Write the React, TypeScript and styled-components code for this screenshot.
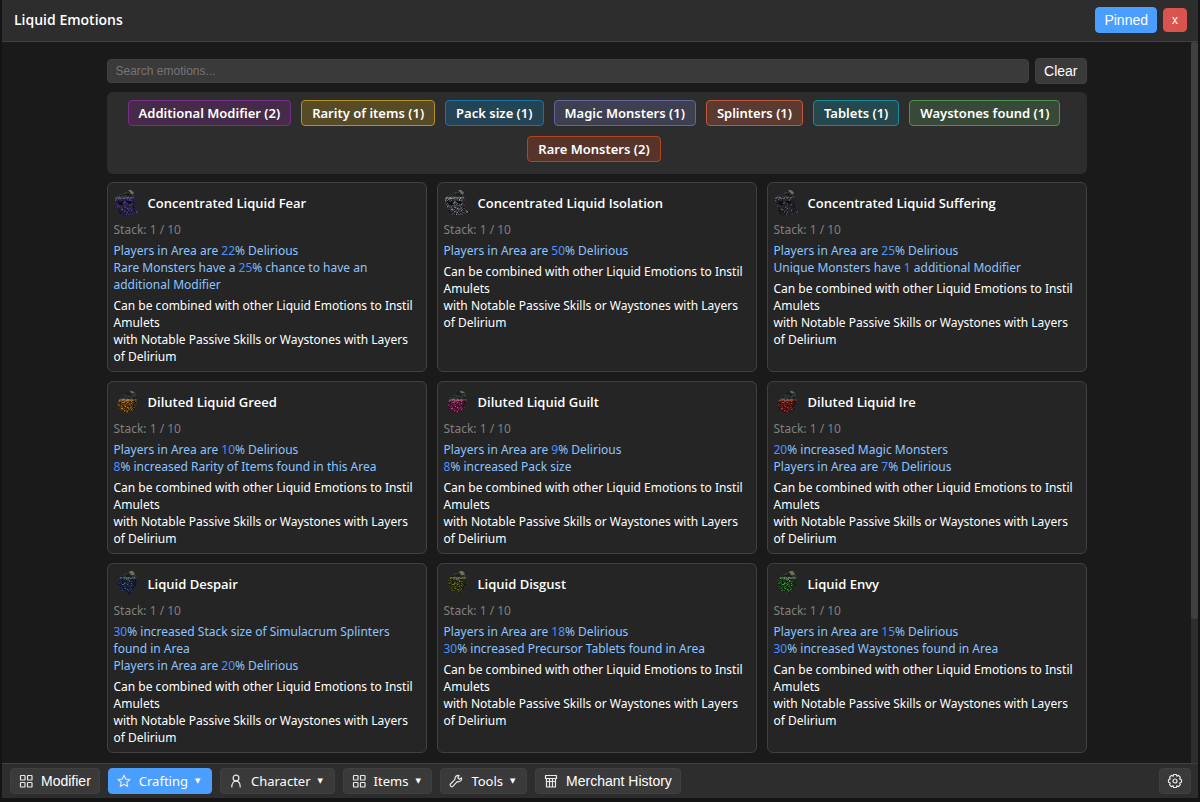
import React, { useId } from "react";
import styled, { createGlobalStyle, css } from "styled-components";

const uiFont = `"Open Sans", "Noto Sans", sans-serif`;
const menuFont = `"Noto Sans", "Open Sans", sans-serif`;
const buttonFont = `"Liberation Sans", Arial, sans-serif`;

const GlobalStyle = createGlobalStyle`
  *, *::before, *::after { box-sizing: border-box; }
  body {
    margin: 0;
    background: #141414;
    color: #fff;
    font-family: ${uiFont};
    font-size: 12px;
  }
`;

const Window = styled.div`
  display: flex;
  flex-direction: column;
  height: 100vh;
  padding: 0 2px 4px;
  background: #141414;
`;

const TitleBar = styled.header`
  display: flex;
  align-items: center;
  justify-content: space-between;
  flex: none;
  height: 42px;
  padding: 0 11px 2px 12px;
  background: #2d2d2d;
  border-bottom: 1px solid #404040;
`;

const Title = styled.h1`
  margin: 0;
  font-size: 14px;
  font-weight: 600;
  line-height: 20px;
`;

const WindowControls = styled.div`
  display: flex;
  align-items: center;
  gap: 6px;
`;

const buttonBase = css`
  display: inline-flex;
  align-items: center;
  height: 26px;
  padding: 0 8px;
  color: #fff;
  font-family: ${buttonFont};
  font-size: 14px;
  line-height: 16px;
  border: 1px solid #404040;
  border-radius: 4px;
  background: #3a3a3a;
  cursor: pointer;
`;

const activeFill = css`
  background: #4a9eff;
  border-color: #4a9eff;
`;

const Button = styled.button<{ $active?: boolean }>`
  ${buttonBase}
  ${(p) => p.$active && activeFill}
`;

const CloseButton = styled.button`
  ${buttonBase}
  justify-content: center;
  width: 24px;
  height: 24px;
  padding: 0;
  font-size: 12px;
  background: #d9534f;
  border-color: #d9534f;
`;

const Body = styled.div`
  display: flex;
  flex: 1;
  min-height: 0;
  background: #1a1a1a;
`;

const Content = styled.main`
  flex: 1;
  min-width: 0;
  overflow: hidden;
  padding: 16px 20px 0;
`;

const Container = styled.div`
  max-width: 980px;
  margin: 0 auto;
  display: flex;
  flex-direction: column;
  gap: 8px;
`;

const ScrollTrack = styled.div`
  flex: none;
  width: 7px;
  background: #2d2d2d;
`;

const ScrollThumb = styled.div`
  height: 80%;
  border-radius: 4px;
  background: #404040;
`;

const SearchRow = styled.div`
  display: flex;
  align-items: center;
  gap: 6px;
`;

const SearchInput = styled.input`
  flex: 1;
  min-width: 0;
  height: 24px;
  padding: 0 8px;
  color: #fff;
  font-family: ${buttonFont};
  font-size: 12px;
  background: #3a3a3a;
  border: 1px solid #404040;
  border-radius: 4px;
  &::placeholder { color: #757575; }
`;

const Filters = styled.div`
  display: flex;
  flex-wrap: wrap;
  justify-content: center;
  gap: 10px;
  padding: 8px 15px 12px 10px;
  border-radius: 6px;
  background: #2d2d2d;
`;

const Chip = styled.button<{ $bg: string; $line: string }>`
  height: 26px;
  padding: 0 10px;
  color: #fff;
  font-family: ${menuFont};
  font-size: 13px;
  font-weight: 600;
  line-height: 18px;
  background: ${(p) => p.$bg};
  border: 1px solid ${(p) => p.$line};
  border-radius: 4px;
  cursor: pointer;
`;

const Grid = styled.section`
  display: grid;
  grid-template-columns: repeat(3, minmax(0, 1fr));
  gap: 9px 10px;
`;

const Card = styled.article`
  padding: 6px 5px 6px 6px;
  background: #252525;
  border: 1px solid #404040;
  border-radius: 6px;
`;

const CardHead = styled.div`
  display: flex;
  align-items: center;
  gap: 6px;
  height: 28px;
  margin-bottom: 4px;
`;

const CardTitle = styled.h2`
  margin: 0;
  font-size: 13px;
  font-weight: 600;
  line-height: 18px;
`;

const Line = styled.p<{ $tone?: "muted" | "stat" }>`
  margin: 0;
  font-family: ${menuFont};
  font-size: 12px;
  line-height: 17px;
  color: ${(p) => (p.$tone === "muted" ? "#808080" : p.$tone === "stat" ? "#8cc4ff" : "#fff")};
`;

const Stats = styled.div`
  margin: 4px 0;
`;

const Value = styled.span`
  color: #4a90ff;
`;

const Nav = styled.nav`
  display: flex;
  flex: none;
  gap: 8px;
  height: 35px;
  padding: 4px 7px 0 8px;
  background: #2d2d2d;
  border-top: 1px solid #404040;
`;

const NavButton = styled.button<{ $active?: boolean; $menu?: boolean }>`
  ${buttonBase}
  gap: 7px;
  padding: 0 8px 0 7px;
  ${(p) => p.$menu && css`font-family: ${menuFont}; font-size: 13px;`}
  ${(p) => p.$active && activeFill}
`;

const SettingsButton = styled.button`
  ${buttonBase}
  padding: 0 7px;
  margin-left: auto;
`;

const Caret = styled.span`
  width: 8px;
  text-align: left;
  font-family: "DejaVu Sans", sans-serif;
  font-size: 7px;
  line-height: 16px;
`;

const Glyph = styled.svg`
  flex: none;
  width: 16px;
  height: 16px;
  fill: none;
  stroke: #e8e8e8;
  stroke-width: 1.2;
  stroke-linejoin: round;
  stroke-linecap: round;
`;

type IconName = "grid" | "star" | "person" | "wrench" | "shop" | "gear";

const iconShapes: Record<IconName, React.ReactNode> = {
  grid: (
    <>
      <rect x="2.5" y="2.5" width="4.5" height="4.5" rx="0.6" />
      <rect x="9.5" y="2.5" width="4.5" height="4.5" rx="0.6" />
      <rect x="2.5" y="9.5" width="4.5" height="4.5" rx="0.6" />
      <rect x="9.5" y="9.5" width="4.5" height="4.5" rx="0.6" />
    </>
  ),
  star: <path d="M8 2.200l1.700 3.900 4.300.4-3.200 2.800.9 4.200L8 11.300l-3.700 2.200.9-4.200L2 6.500l4.300-.4z" />,
  person: (
    <>
      <circle cx="8" cy="5" r="2.9" />
      <path d="M3.800 14c0-3.600 1.600-5.800 4.200-5.800s4.200 2.200 4.200 5.800" />
    </>
  ),
  wrench: (
    <path d="M13.600 4.800l-2.200 1.500-1.600-1.500 1.300-2.300c-2.400-.6-4.600 1.300-4.100 3.900L2.500 11c-1.300 1.500.8 3.600 2.300 2.300l4.400-4.600c2.600.5 4.900-1.400 4.400-3.900z" />
  ),
  shop: <path d="M2.500 2.500h11v3h-11zM3.500 5.500v8.500h9V5.500M3.500 8.500h9M6.500 5.500V14M9.500 5.500V14" />,
  gear: (
    <>
      <path d="M6.700 1.500h2.600l.5 1.700 1.700-.8 1.900 1.900-.8 1.700 1.900.7v2.600l-1.900.7.8 1.700-1.900 1.900-1.700-.8-.5 1.700H6.700l-.6-1.700-1.700.8-1.900-1.900.8-1.700-1.800-.7V6.700l1.800-.7-.8-1.700 1.900-1.900 1.700.8z" />
      <circle cx="8" cy="8" r="2" />
    </>
  ),
};

const Icon = ({ name }: { name: IconName }) => (
  <Glyph viewBox="0 0 16 16" aria-hidden="true">{iconShapes[name]}</Glyph>
);

const FlaskArt = styled.svg`
  flex: none;
  width: 28px;
  height: 28px;
`;

type Shape = "concentrated" | "diluted" | "plain";

interface FlaskColors { deep: string; mid: string; glow: string }

const outlines: Record<Shape, string> = {
  concentrated: "M13.500 1.500l3-.7 3 2.200.7 6 .3 6 1.500 6 3.500 1.700-3.500 1-4.500 2-6 .6-5.500-.6-2-6-3-6v-4.500l4-3.400 4.500-1.500z",
  diluted: "M17 2.800l4 1.500 1.500 3 .5 8-3.500 7-4 2-5 .7-5.500-4-1.700-5.500 2.700-6 6.500-4.500z",
  plain: "M15.500 1.500l3-.7 3 2.200 1 6-.5 7-4 4-2.500 5.500-3-3.500-6.500-2.200-2.500-7.500 4-7z",
};

/* y at which the stone top ends, and at which the liquid starts */
const levels: Record<Shape, [number, number]> = {
  concentrated: [8, 10],
  diluted: [11, 13],
  plain: [7, 9],
};

const stoneTones = ["#262b2a", "#343a36", "#45483f", "#191d1e", "#2c3331"];

const speckles = (shape: Shape, { deep, mid, glow }: FlaskColors) => {
  const [stoneEnd, liquidStart] = levels[shape];
  const liquid = [deep, mid, "#101114", mid, deep, mid, "#17181c", glow, deep];
  const band = [glow, "#77726a", mid];
  const cells: React.ReactNode[] = [];
  let seed = 41;
  for (let y = 0; y < 28; y += 1) {
    for (let x = 0; x < 28; x += 1) {
      seed = (seed * 1103515245 + 12345) % 2147483648;
      const tones = y < stoneEnd ? stoneTones : y < liquidStart ? band : liquid;
      const tone = tones[Math.floor((seed / 2147483648) * tones.length)];
      cells.push(<rect key={`${x}-${y}`} x={x} y={y} width="1" height="1" fill={tone} />);
    }
  }
  return cells;
};

const Flask = ({ shape, colors }: { shape: Shape; colors: FlaskColors }) => {
  const clip = useId();
  const [stoneEnd] = levels[shape];
  return (
    <FlaskArt viewBox="0 0 28 28" aria-hidden="true">
      <clipPath id={clip}><path d={outlines[shape]} /></clipPath>
      <g clipPath={`url(#${clip})`}>
        <rect y="0" width="28" height={stoneEnd} fill="#232827" />
        <rect y={stoneEnd} width="28" height={28 - stoneEnd} fill={colors.deep} />
        <g opacity="0.75">{speckles(shape, colors)}</g>
        <path d="M14 1l4-1 3 4-3 1.500z" fill="#8d8068" opacity="0.8" />
        <path d="M9 6l5-2 3 1-4 2z" fill="#14181a" opacity="0.7" />
        {shape === "concentrated" && <path d="M3 12l5 1 2 3-4 0zM12 12l5 0 1 2-4 1z" fill="#0d0d14" />}
        <path d="M19 9l4-1 0 12-5 4zM2 18l5 3 6 3-3 4-8-2z" fill="#0d0d10" opacity="0.45" />
      </g>
    </FlaskArt>
  );
};

const filters = [
  { label: "Additional Modifier (2)", bg: "#452a49", line: "#7b2d8b" },
  { label: "Rarity of items (1)", bg: "#574a26", line: "#b8901c" },
  { label: "Pack size (1)", bg: "#244354", line: "#1476a6" },
  { label: "Magic Monsters (1)", bg: "#3e3f50", line: "#62669a" },
  { label: "Splinters (1)", bg: "#5a3a31", line: "#c3573a" },
  { label: "Tablets (1)", bg: "#24484e", line: "#128c9a" },
  { label: "Waystones found (1)", bg: "#384a37", line: "#4c9250" },
  { label: "Rare Monsters (2)", bg: "#56342a", line: "#b5431f" },
];

interface Emotion { name: string; shape: Shape; colors: FlaskColors; stats: string[] }

const emotions: Emotion[] = [
  { name: "Concentrated Liquid Fear", shape: "concentrated", colors: { deep: "#2a2242", mid: "#44307a", glow: "#6d4cb4" }, stats: ["Players in Area are 22% Delirious", "Rare Monsters have a 25% chance to have an additional Modifier"] },
  { name: "Concentrated Liquid Isolation", shape: "concentrated", colors: { deep: "#34363a", mid: "#5a5c60", glow: "#a4a6a8" }, stats: ["Players in Area are 50% Delirious"] },
  { name: "Concentrated Liquid Suffering", shape: "concentrated", colors: { deep: "#2c2c30", mid: "#1d1d26", glow: "#6e6e78" }, stats: ["Players in Area are 25% Delirious", "Unique Monsters have 1 additional Modifier"] },
  { name: "Diluted Liquid Greed", shape: "diluted", colors: { deep: "#4c3210", mid: "#8a5a18", glow: "#d0963c" }, stats: ["Players in Area are 10% Delirious", "8% increased Rarity of Items found in this Area"] },
  { name: "Diluted Liquid Guilt", shape: "diluted", colors: { deep: "#4a1630", mid: "#842a52", glow: "#cc6490" }, stats: ["Players in Area are 9% Delirious", "8% increased Pack size"] },
  { name: "Diluted Liquid Ire", shape: "diluted", colors: { deep: "#431614", mid: "#80261e", glow: "#c05a48" }, stats: ["20% increased Magic Monsters", "Players in Area are 7% Delirious"] },
  { name: "Liquid Despair", shape: "plain", colors: { deep: "#141e33", mid: "#23395c", glow: "#5878a4" }, stats: ["30% increased Stack size of Simulacrum Splinters found in Area", "Players in Area are 20% Delirious"] },
  { name: "Liquid Disgust", shape: "plain", colors: { deep: "#2a2a10", mid: "#54551d", glow: "#8a8640" }, stats: ["Players in Area are 18% Delirious", "30% increased Precursor Tablets found in Area"] },
  { name: "Liquid Envy", shape: "plain", colors: { deep: "#173317", mid: "#2c702a", glow: "#65bd54" }, stats: ["Players in Area are 15% Delirious", "30% increased Waystones found in Area"] },
];

const StatLine = ({ text }: { text: string }) => (
  <Line $tone="stat">
    {text.split(/(\d+)/).map((part, i) => (/^\d+$/.test(part) ? <Value key={i}>{part}</Value> : part))}
  </Line>
);

const EmotionCard = ({ emotion }: { emotion: Emotion }) => (
  <Card>
    <CardHead>
      <Flask shape={emotion.shape} colors={emotion.colors} />
      <CardTitle>{emotion.name}</CardTitle>
    </CardHead>
    <Line $tone="muted">Stack: 1 / 10</Line>
    <Stats>
      {emotion.stats.map((s) => <StatLine key={s} text={s} />)}
    </Stats>
    <Line>Can be combined with other Liquid Emotions to Instil Amulets</Line>
    <Line>with Notable Passive Skills or Waystones with Layers of Delirium</Line>
  </Card>
);

const navItems: { label: string; icon: IconName; menu?: boolean; active?: boolean }[] = [
  { label: "Modifier", icon: "grid" },
  { label: "Crafting", icon: "star", menu: true, active: true },
  { label: "Character", icon: "person", menu: true },
  { label: "Items", icon: "grid", menu: true },
  { label: "Tools", icon: "wrench", menu: true },
  { label: "Merchant History", icon: "shop" },
];

export default function App() {
  return (
    <Window>
      <GlobalStyle />
      <TitleBar>
        <Title>Liquid Emotions</Title>
        <WindowControls>
          <Button $active>Pinned</Button>
          <CloseButton aria-label="Close">x</CloseButton>
        </WindowControls>
      </TitleBar>
      <Body>
        <Content>
          <Container>
            <SearchRow>
              <SearchInput type="text" aria-label="Search emotions" placeholder="Search emotions..." />
              <Button>Clear</Button>
            </SearchRow>
            <Filters>
              {filters.map((f) => <Chip key={f.label} $bg={f.bg} $line={f.line}>{f.label}</Chip>)}
            </Filters>
            <Grid>
              {emotions.map((e) => <EmotionCard key={e.name} emotion={e} />)}
            </Grid>
          </Container>
        </Content>
        <ScrollTrack><ScrollThumb /></ScrollTrack>
      </Body>
      <Nav>
        {navItems.map((n) => (
          <NavButton key={n.label} $active={n.active} $menu={n.menu}>
            <Icon name={n.icon} />
            {n.label}
            {n.menu && <Caret aria-hidden="true">▼</Caret>}
          </NavButton>
        ))}
        <SettingsButton aria-label="Settings"><Icon name="gear" /></SettingsButton>
      </Nav>
    </Window>
  );
}
